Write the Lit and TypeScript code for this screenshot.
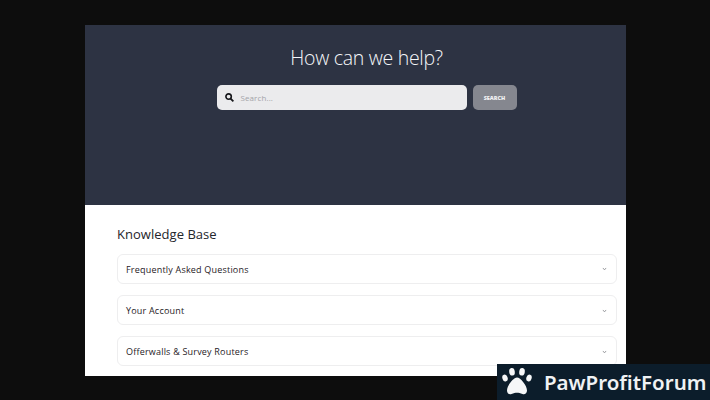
import { LitElement, html, css } from "lit";
import { customElement } from "lit/decorators.js";

@customElement("app-root")
export class AppRoot extends LitElement {
  static styles = css`
    :host { display: block; width: 710px; height: 400px; background: #0d0d0d; overflow: hidden; position: relative; font-family: "Open Sans", sans-serif; }
    .page { margin: 25px 0 0 85px; width: 541px; height: 351px; background: #fff; overflow: hidden; }
    .hero { height: 180px; box-sizing: border-box; padding-left: 22px; background: #2d3343; display: flex; flex-direction: column; align-items: center; }
    h1 { margin: 18px 0 0; font-size: 19.5px; line-height: 29px; font-weight: 300; color: #f6f7fa; letter-spacing: -0.3px; }
    .search { display: flex; gap: 6px; margin-top: 13px; }
    .box { width: 250px; height: 25px; box-sizing: border-box; background: #ebebed; border-radius: 5px; display: flex; align-items: center; padding-left: 8px; gap: 7px; font-size: 8px; letter-spacing: 0.1px; color: #a3a4a9; }
    .box svg { width: 9px; height: 9px; flex: none; }
    .btn { width: 44px; height: 25px; border-radius: 5px; background: #85878f; color: #f2f2f4; font-size: 5.5px; font-weight: 800; display: flex; align-items: center; justify-content: center; }
    .kb { padding: 20px 9px 0 32px; }
    h2 { margin: 0 0 10px; font-size: 13px; line-height: 19px; font-weight: 400; color: #24262b; letter-spacing: 0.03px; }
    .list { display: flex; flex-direction: column; gap: 11.5px; }
    .item { height: 29.7px; box-sizing: border-box; border: 1px solid #eeeeef; border-radius: 6px; display: flex; align-items: center; justify-content: space-between; padding: 1px 9px 0 8px; font-size: 9px; letter-spacing: 0.2px; color: #1f2126; }
    .item svg { width: 5px; height: 4px; }
    .badge { position: absolute; right: 0; bottom: 0; width: 213px; height: 36px; background: #0c1d2b; display: flex; align-items: center; padding-left: 5px; box-sizing: border-box; gap: 12px; color: #f0f2f4; font-family: "Noto Sans", sans-serif; font-size: 20.5px; font-weight: 600; }
    .badge svg { width: 30px; height: 30px; flex: none; }
    .badge span { white-space: nowrap; }
  `;
  render() {
    const items = ["Frequently Asked Questions", "Your Account", "Offerwalls & Survey Routers"];
    return html`
      <div class="page">
        <div class="hero">
          <h1>How can we help?</h1>
          <div class="search">
            <div class="box">
              <svg viewBox="0 0 10 10"><circle cx="4" cy="4" r="3" fill="none" stroke="#17181c" stroke-width="1.8"/><path d="M6.2 6.2 9.3 9.3" stroke="#17181c" stroke-width="2"/></svg>
              <span>Search...</span>
            </div>
            <div class="btn">SEARCH</div>
          </div>
        </div>
        <div class="kb">
          <h2>Knowledge Base</h2>
          <div class="list">
            ${items.map((t) => html`<div class="item"><span>${t}</span><svg viewBox="0 0 6 5"><path d="M1 1.2 3 3.6 5 1.2" fill="none" stroke="#85878c" stroke-width="1"/></svg></div>`)}
          </div>
        </div>
      </div>
      <div class="badge">
        <svg viewBox="0 0 30 30" fill="#f6f7f8">
          <ellipse cx="3" cy="11" rx="2.600" ry="3.400" transform="rotate(-20 3 11)"/>
          <ellipse cx="10" cy="4.800" rx="2.800" ry="3.800" transform="rotate(-8 10 4.800)"/>
          <ellipse cx="20" cy="4.800" rx="2.800" ry="3.800" transform="rotate(8 20 4.800)"/>
          <ellipse cx="27" cy="11" rx="2.600" ry="3.400" transform="rotate(20 27 11)"/>
          <path d="M15 10.500c-3.500 0-10 8-10 13 0 3 2.300 4.200 4.500 3.500 2.200-.7 3.800-1.200 5.500-1.200s3.300.5 5.500 1.200c2.200.7 4.500-.5 4.500-3.500 0-5-6.500-13-10-13Z"/>
        </svg>
        <span>PawProfitForum</span>
      </div>
    `;
  }
}
